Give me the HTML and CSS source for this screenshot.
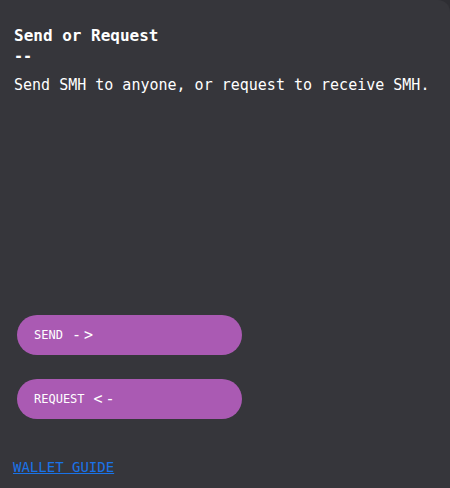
FILE: index.html
```html
<!DOCTYPE html>
<html>
<head>
<meta charset="utf-8">
<link rel="stylesheet" href="styles.css">
</head>
<body>
<div class="panel">
  <h1 class="title">Send or Request</h1>
  <div class="dash">--</div>
  <p class="desc">Send SMH to anyone, or request to receive SMH.</p>
  <div class="actions">
    <button class="pill">SEND <span class="arrow">-&gt;</span></button>
    <button class="pill">REQUEST <span class="arrow">&lt;-</span></button>
  </div>
  <a class="guide" href="#">WALLET GUIDE</a>
</div>
</body>
</html>
```
FILE: styles.css
```css
html, body {
  margin: 0;
  padding: 0;
  background: #2e2e33;
  height: 100%;
}
.panel {
  box-sizing: border-box;
  width: 450px;
  height: 488px;
  background: #36363b;
  border-top-right-radius: 12px;
  padding: 26px 14px 0 14px;
  display: flex;
  flex-direction: column;
  font-family: "DejaVu Sans Mono", "Liberation Mono", monospace;
  color: #ffffff;
}
.title {
  margin: 0;
  font-size: 16px;
  font-weight: bold;
  line-height: 20px;
}
.dash {
  font-size: 15px;
  font-weight: bold;
  line-height: 16px;
  margin-top: 2px;
}
.desc {
  margin: 11px 0 0 0;
  font-size: 15px;
  line-height: 20px;
}
.actions {
  margin-top: 220px;
  padding-left: 3px;
  display: flex;
  flex-direction: column;
  gap: 24px;
}
.pill {
  width: 225px;
  height: 40px;
  border: none;
  border-radius: 20px;
  background: #aa5ab3;
  color: #ffffff;
  font-family: "DejaVu Sans Mono", "Liberation Mono", monospace;
  font-size: 12px;
  text-align: left;
  padding: 0 0 0 17px;
  display: flex;
  align-items: center;
  gap: 9px;
}
.arrow {
  font-size: 15px;
  letter-spacing: 3px;
}
.guide {
  margin-top: 40px;
  margin-left: -1px;
  font-size: 14px;
  color: #1a73e8;
  text-decoration: underline;
  align-self: flex-start;
}
```
